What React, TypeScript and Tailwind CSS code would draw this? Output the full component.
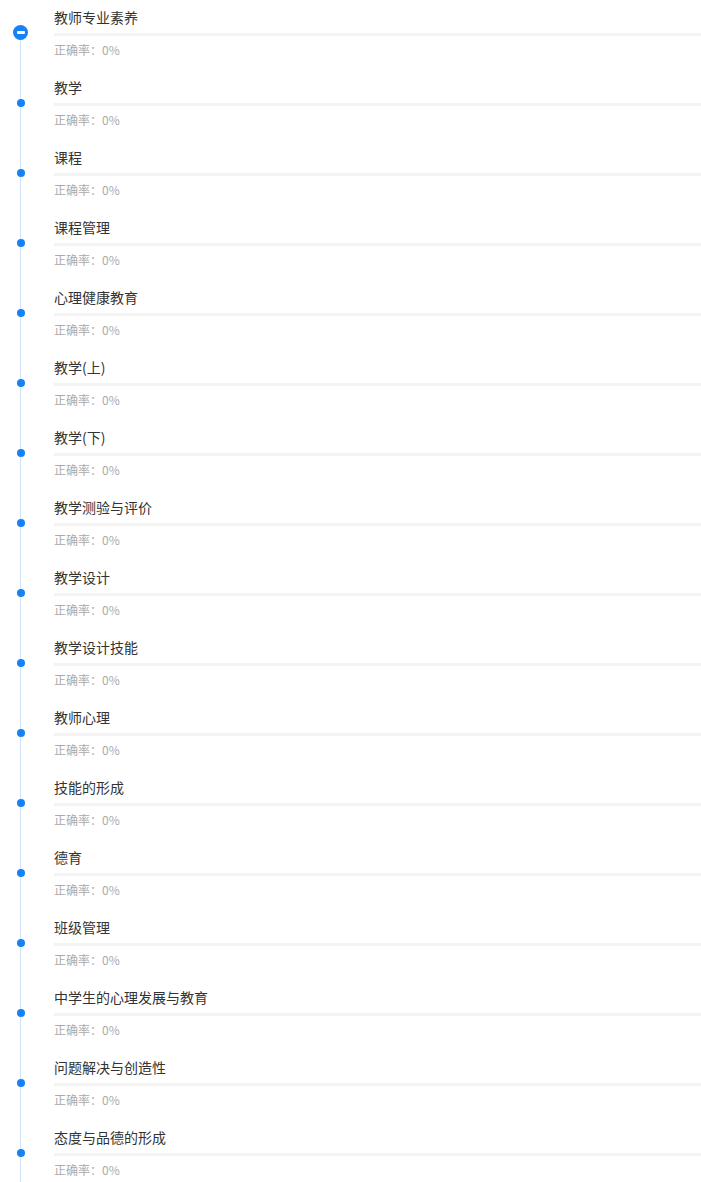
import React from "react";

const topics = [
  "教师专业素养",
  "教学",
  "课程",
  "课程管理",
  "心理健康教育",
  "教学(上)",
  "教学(下)",
  "教学测验与评价",
  "教学设计",
  "教学设计技能",
  "教师心理",
  "技能的形成",
  "德育",
  "班级管理",
  "中学生的心理发展与教育",
  "问题解决与创造性",
  "态度与品德的形成",
];

function Marker({ first }: { first: boolean }) {
  if (first) {
    return (
      <div className="w-[15px] h-[15px] rounded-full bg-[#1583f5] flex items-center justify-center">
        <div className="w-[8px] h-[3px] bg-white rounded-[1px]" />
      </div>
    );
  }
  return <div className="w-[8px] h-[8px] rounded-full bg-[#1583f5]" />;
}

export default function App() {
  return (
    <div
      className="w-[701px] bg-white"
      style={{ fontFamily: '"Noto Sans CJK SC", "Noto Sans", sans-serif' }}
    >
      {topics.map((t, i) => {
        const first = i === 0;
        return (
          <div key={t} className="flex h-[70px]">
            <div className="w-[54px] flex flex-col items-center pr-[13px] pl-0">
              <div className="w-[40px] flex flex-col items-center h-full">
                <div
                  className={
                    "w-px " +
                    (first ? "h-[25px] bg-transparent" : "h-[29px] bg-[#cfe2fa]")
                  }
                />
                <Marker first={first} />
                <div className="w-px flex-1 bg-[#cfe2fa]" />
              </div>
            </div>
            <div className="flex-1 pt-[7px]">
              <div className="h-[20px] leading-[20px] text-[14px] text-[#333333]">
                {t}
              </div>
              <div className="mt-[6px] h-[3px] bg-[#f3f3f3]" />
              <div className="mt-[6px] h-[16px] leading-[16px] text-[12px] text-[#aaaaaa]">
                正确率：0%
              </div>
            </div>
          </div>
        );
      })}
    </div>
  );
}
